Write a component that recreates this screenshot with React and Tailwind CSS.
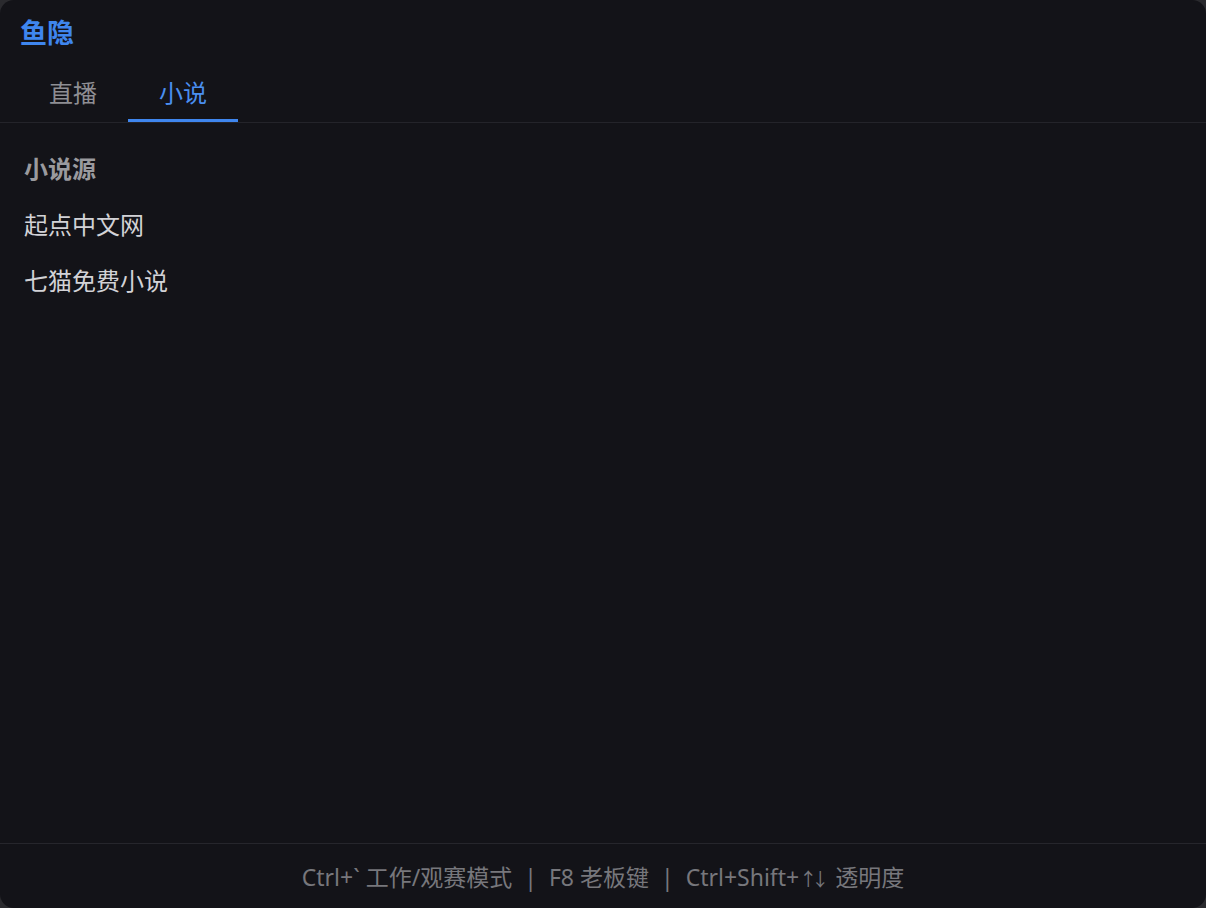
import React, { useState } from "react";

const font = { fontFamily: '"Noto Sans", "Noto Sans CJK SC", sans-serif' };

const tabs = ["直播", "小说"];
const sources = ["起点中文网", "七猫免费小说"];

export default function App() {
  const [active, setActive] = useState(1);

  return (
    <div className="w-[1206px] h-[908px] bg-[#2a2a2e]" style={font}>
      <div className="h-full flex flex-col bg-[#131318] rounded-[14px] overflow-hidden">
        <div className="px-5 pt-[14px] text-[27px] leading-[38px] font-bold text-[#3f86ee]">
          鱼隐
        </div>

        <div className="mt-[12px] flex flex-row border-b border-[#24242a]">
          {tabs.map((t, i) => (
            <div
              key={t}
              onClick={() => setActive(i)}
              className={
                "w-[110px] first:ml-[18px] h-[58px] flex items-center justify-center text-[24px] cursor-pointer border-b-[3px] pt-[3px] " +
                (active === i
                  ? "text-[#4a8ff0] border-[#3f86ee]"
                  : "text-[#8e8e93] border-transparent")
              }
            >
              {t}
            </div>
          ))}
        </div>

        <div className="flex-1 px-6 pt-[30px]">
          <div className="text-[24px] leading-[32px] font-bold text-[#9a9a9e]">小说源</div>
          {sources.map((s) => (
            <div
              key={s}
              className="mt-[24px] text-[24px] leading-[32px] text-[#d2d2d6] cursor-pointer"
            >
              {s}
            </div>
          ))}
        </div>

        <div className="h-[65px] border-t border-[#26262c] flex items-center justify-center gap-[12px] text-[23px] text-[#77777c] pt-[2px]">
          <span>Ctrl+` 工作/观赛模式</span>
          <span>|</span>
          <span>F8 老板键</span>
          <span>|</span>
          <span>
            Ctrl+Shift+<span className="tracking-[-6px] text-[18px]">↑↓</span>&nbsp;&nbsp;透明度
          </span>
        </div>
      </div>
    </div>
  );
}
